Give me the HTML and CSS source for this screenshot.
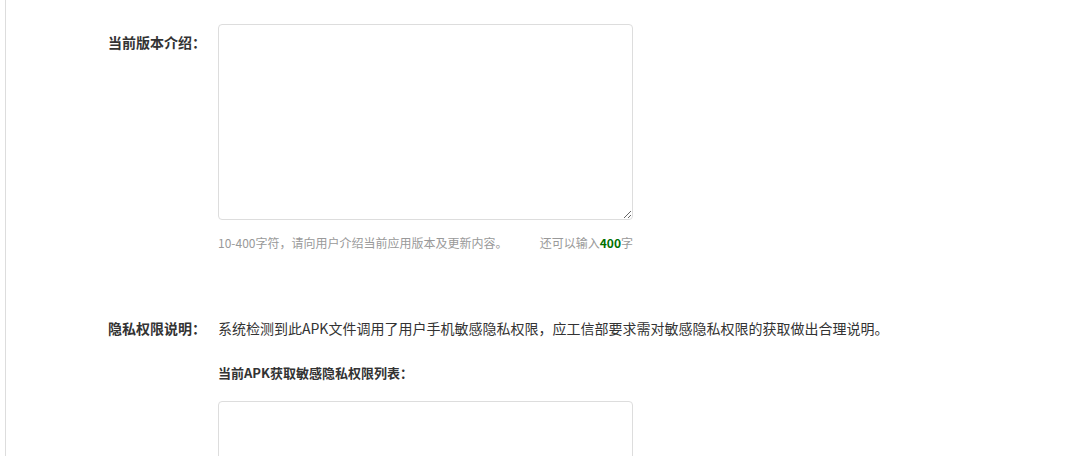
FILE: index.html
```html
<!DOCTYPE html>
<html>
<head>
	<title>版本信息</title>
	<meta charset="utf-8">
	<link rel="stylesheet" href="styles.css">
</head>
<body>
	<div class="page">
		<div class="row">
			<div class="label">当前版本介绍：</div>
			<div class="field">
				<textarea class="box" id="intro"></textarea>
				<div class="hint">
					<span>10-400字符，请向用户介绍当前应用版本及更新内容。</span>
					<span>还可以输入<b class="left" id="left">400</b>字</span>
				</div>
			</div>
		</div>

		<div class="row privacy">
			<div class="label">隐私权限说明：</div>
			<div class="field">
				<p class="desc">系统检测到此APK文件调用了用户手机敏感隐私权限，应工信部要求需对敏感隐私权限的获取做出合理说明。</p>
				<h4 class="subtitle">当前APK获取敏感隐私权限列表：</h4>
				<textarea class="box"></textarea>
			</div>
		</div>
	</div>
	<script type="text/javascript">
		var intro = document.querySelector('#intro');
		var left = document.querySelector('#left');
		intro.oninput = function () {
			left.textContent = Math.max(0, 400 - intro.value.length);
		}
	</script>
</body>
</html>
```

FILE: styles.css
```css
*{
	padding: 0;
	margin: 0;
	box-sizing: border-box;
}
body{
	font-family: "Noto Sans CJK SC", "Microsoft YaHei", sans-serif;
	background-color: #fff;
	color: #333;
	overflow: hidden;
}
.page{
	margin-left: 5px;
	border-left: 1px solid #ddd;
	min-height: 456px;
	padding-top: 24px;
}
.row{
	display: flex;
}
.label{
	width: 212px;
	padding-right: 12px;
	text-align: right;
	font-size: 14px;
	line-height: 20px;
	font-weight: bold;
	color: #333;
	padding-top: 8px;
}
.field{
	width: 640px;
}
.box{
	display: block;
	width: 415px;
	height: 196px;
	border: 1px solid #ddd;
	border-radius: 4px;
	outline: none;
	font-family: inherit;
	font-size: 13px;
}
.hint{
	width: 415px;
	margin-top: 14px;
	display: flex;
	justify-content: space-between;
	font-size: 12px;
	line-height: 18px;
	color: #999;
}
.left{
	color: #007000;
	font-weight: bold;
}
.privacy{
	margin-top: 66px;
}
.privacy .label{
	padding-top: 0;
}
.desc{
	font-size: 14px;
	line-height: 20px;
	color: #333;
	white-space: nowrap;
}
.subtitle{
	margin-top: 25px;
	font-size: 13px;
	line-height: 20px;
	color: #333;
}
.privacy .box{
	margin-top: 18px;
}
```
